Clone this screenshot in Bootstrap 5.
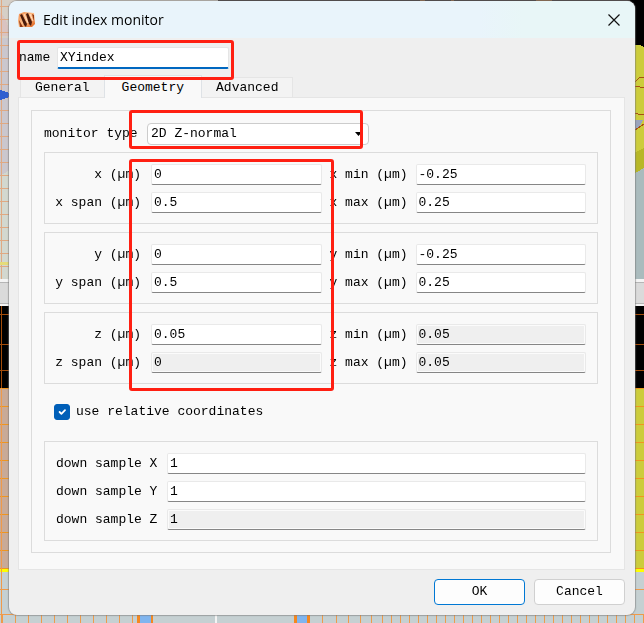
<!DOCTYPE html>
<html lang="en">
<head>
<meta charset="utf-8">
<meta name="viewport" content="width=device-width, initial-scale=1">
<title>Edit index monitor</title>
<link href="https://cdn.jsdelivr.net/npm/bootstrap@5.3.0/dist/css/bootstrap.min.css" rel="stylesheet">
<style>
body { font: 13px/20px "Liberation Mono", monospace; color: #000; background: #c5d0d2; min-height: 100vh; padding: 1px 9px 9px; }
.backdrop { position: fixed; inset: 0; width: 100%; height: 100%; z-index: -1; }
.dialog-window { background: #efefef; border-radius: 8px; box-shadow: 0 0 1px 1px #77777788; }
.title-bar { height: 37px; padding: 0 13px 0 9px; border-radius: 8px 8px 0 0; background: linear-gradient(90deg, #e9f4fb 75%, #e8f6f7 82%); font: 14px/20px "Open Sans", sans-serif; }
.title-bar button { width: 16px; height: 16px; line-height: 0; }
.name-row { padding: 9px 0 0 10px; height: 37px; }
.name-row label { width: 38px; line-height: 22px; }
.name-row .form-control { width: 172px; border-color: #e5e5e5; border-bottom: 2px solid #0067c0; }
.form-control, .form-select { font: inherit; color: #000; height: 22px; min-height: 0; padding: 0 2px; border: 1px solid #e9e9e9; border-bottom-color: #868686; border-radius: 2px; background-color: #fff; }
.form-control:disabled { background: #efefef; box-shadow: inset 0 0 0 1px #fbfbfb; opacity: 1; color: #000; }
.param-grid .form-control, .sample-grid .form-control { height: 21px; }
.nav-tabs { border: 0; padding-left: 11px; }
.nav-tabs .nav-link { font: inherit; line-height: 18px; color: #000; background: #f3f3f3; border: 1px solid #e5e5e5; border-radius: 0; padding: 1px 14px 0; height: 21px; margin: 0 -1px 0 0; }
.nav-tabs .nav-link.active { background: #f9f9f9; border-bottom: 0; height: 23px; padding: 1px 17px 0; position: relative; z-index: 1; color: #000; }
.tab-pane-box { background: #f9f9f9; border: 1px solid #e5e5e5; margin: -1px 10px 0 9px; padding: 12px 13px 16px 12px; }
.frame-box { border: 1px solid #dcdcdc; }
.main-frame { padding: 12px 12px 11px 12px; }
.type-row { height: 21px; margin-bottom: 8px; }
.type-row label { width: 103px; white-space: nowrap; }
.type-row .form-select { width: 222px; padding: 0 3px; border-color: #ccc; border-radius: 4px; background-size: 7px 4px; background-position: right 6px center; background-image: url("data:image/svg+xml,%3csvg xmlns='http://www.w3.org/2000/svg' viewBox='0 0 7 4'%3e%3cpath d='M0 0h7L3.500 4z'/%3e%3c/svg%3e"); }
.param-grid { display: grid; grid-template-columns: 98px 1fr 78px 1fr; gap: 7px 8px; padding: 11px 11px 10px 0; }
.param-grid label { text-align: right; white-space: nowrap; line-height: 21px; }
.param-grid label:nth-of-type(odd) { padding-right: 2px; }
.check-row { margin: 17px 0 18px 10px; line-height: 22px; }
.check-row label { padding-left: 6px; }
.check-row .form-check-input { width: 16px; height: 16px; margin: 0; border-radius: 3px; }
.check-row .form-check-input:checked { background-color: #005fb8; border-color: #005fb8; background-size: 12px; }
.sample-grid { display: grid; grid-template-columns: 111px 1fr; row-gap: 7px; padding: 11px 11px 10px; }
.sample-grid label { white-space: nowrap; line-height: 21px; }
.dialog-actions { padding: 9px 10px 10px; gap: 9px; }
.dialog-actions .btn { font: inherit; color: #000; background: #fdfdfd; border: 1px solid #d0d0d0; border-radius: 4px; width: 91px; height: 26px; padding: 0; }
.dialog-actions .btn.ok-btn { border-color: #0078d4; }
.callout-box { position: absolute; border: 3px solid #ff1f12; border-radius: 3px; pointer-events: none; z-index: 3; }
.name-callout { left: 8px; top: 2px; width: 217px; height: 40px; }
.type-callout { left: 85px; top: -13px; width: 234px; height: 39px; }
.params-callout { left: 85px; top: 7px; width: 205px; height: 232px; }
</style>
<script src="https://cdn.jsdelivr.net/npm/bootstrap@5.3.0/dist/js/bootstrap.bundle.min.js"></script>
</head>
<body>
<svg class="backdrop" viewBox="0 0 644 623" preserveAspectRatio="none" aria-hidden="true" shape-rendering="crispEdges">
  <defs>
    <pattern id="meshA" width="20" height="13" patternUnits="userSpaceOnUse"><path d="M0 6.500H20" stroke="#e0a982"/></pattern>
    <pattern id="meshB" width="20" height="18" patternUnits="userSpaceOnUse" y="10"><path d="M0 .5H20" stroke="#f0961e"/></pattern>
    <pattern id="meshC" width="9" height="10" patternUnits="userSpaceOnUse"><path d="M4.500 0V10" stroke="#ef9a4a"/></pattern>
    <pattern id="meshD" width="13" height="10" patternUnits="userSpaceOnUse"><path d="M2.500 0V10" stroke="#ef9a4a"/></pattern>
  </defs>
  <path fill="#d6cfc6" d="M0 0H218V280H0z"/>
  <path fill="#d9c3c0" d="M0 12Q9 20 9 36H0z"/>
  <path fill="#cbc7cd" d="M0 38H10V170L0 176z"/>
  <path fill="#d3d8cf" d="M0 176L10 170V280H0z"/>
  <path fill="url(#meshA)" d="M0 0H10V280H0z"/>
  <path d="M1.500 0V280" stroke="#e0a982"/>
  <path fill="#2f5fd0" d="M0 90l9 3v4l-9 3z"/>
  <path fill="#e5dc79" d="M0 262H10V265H0z"/>
  <path fill="#302828" d="M218 0H644V2H218z"/>
  <path fill="#8c5a32" d="M420 0h5v1h-5zM451 0h3v1h-3zM536 0h16v1h-16z"/>
  <path fill="#000" d="M630 0H644V60H630z"/>
  <path fill="#cccc3c" d="M630 45H640L644 47V173H630z"/>
  <path fill="#b7b727" d="M630 155L644 148V173H630z"/>
  <path fill="#aabbbd" d="M630 176L644 168V280H630z"/>
  <path fill="#9aa3bd" d="M634 120H643L640 126L634 130z"/>
  <path fill="none" stroke="#a84e14" d="M635 82L639 78L644 77M635 86.500L644 87.500M635 113.500L644 115M635 130L644 124"/>
  <path fill="#f4f4f4" d="M0 279H644V306H0z"/>
  <path fill="#dadada" stroke="#b5b5b5" d="M-1 282.500H645V303.500H-1z"/>
  <path fill="#000" d="M0 306H644V388H0z"/>
  <path stroke="#a34c0a" d="M0 314.500H644M0 344.500H644M0 370.500H644M1.500 306V388"/>
  <path fill="#c9aa97" d="M0 388H320V569H0z"/>
  <path fill="#cccc3c" d="M320 388H644V569H320z"/>
  <path fill="url(#meshB)" d="M0 388H644V569H0z"/>
  <path fill="#ffff00" d="M0 569H644V572H0z"/>
  <path fill="#c5d0d2" d="M0 572H644V623H0z"/>
  <path stroke="#ef9a4a" d="M0 589.500H644M0 614.500H155M310 614.500H644M1.500 388V623"/>
  <path fill="url(#meshD)" d="M0 614H137V623H0z"/>
  <path fill="url(#meshC)" d="M376 614H644V623H376z"/>
  <path fill="#80b5ef" d="M140 614h12v9h-12zM297 614h10v9h-10z"/>
  <path fill="#f5871f" d="M137 614h3v9h-3zM151 614h2v9h-2zM294 614h3v9h-3zM307 614h3v9h-3z"/>
  <path fill="#ef9a4a" d="M322 614h1v9h-1zM336 614h1v9h-1zM348 614h1v9h-1zM360 614h1v9h-1zM371 614h1v9h-1z"/>
  <path fill="#f4f4f4" d="M215 614h2v9h-2z"/>
</svg>

<main class="dialog-window">
  <header class="title-bar d-flex align-items-center">
    <svg class="me-2" width="17" height="16" viewBox="0 0 17 16" aria-hidden="true">
      <defs><linearGradient id="logoFill" x2="1" y2="1"><stop stop-color="#f08a4a"/><stop offset=".5" stop-color="#ffbd87"/><stop offset="1" stop-color="#df5d15"/></linearGradient></defs>
      <path fill="url(#logoFill)" d="M1 2L6 0L16 1L17 12L14 15L1 15L0 9z"/>
      <path fill="#4a1a0a" d="M2 3L4 2L9 12L8 15L6 13zM8 2L10 1L14 10L13 14L11 12z"/>
      <path fill="#8f3610" d="M1 8L5 15H2zM14 2L16 3V9z"/>
      <path fill="none" stroke="#ffe0c4" d="M6 2L10 11M12 2L15 9"/>
    </svg>
    <span>Edit index monitor</span>
    <button type="button" class="btn p-0 border-0 ms-auto" aria-label="Close">
      <svg width="14" height="14" viewBox="0 0 14 14" aria-hidden="true"><path d="M1.500 1.500L12.500 12.500M12.500 1.500L1.500 12.500" stroke="#111" stroke-width="1.200"/></svg>
    </button>
  </header>

  <form>
    <div class="name-row d-flex position-relative">
      <label for="monitorName">name</label>
      <input id="monitorName" class="form-control" type="text" value="XYindex">
      <div class="callout-box name-callout"></div>
    </div>

    <div class="nav nav-tabs align-items-end" role="tablist">
      <button class="nav-link" type="button" role="tab">General</button>
      <button class="nav-link active" type="button" role="tab" aria-selected="true">Geometry</button>
      <button class="nav-link" type="button" role="tab">Advanced</button>
    </div>

    <div class="tab-pane-box">
      <div class="frame-box main-frame">
        <div class="type-row d-flex align-items-center position-relative">
          <label for="monitorType">monitor type</label>
          <select id="monitorType" class="form-select"><option>2D Z-normal</option></select>
          <div class="callout-box type-callout"></div>
        </div>

        <div class="d-flex flex-column gap-2 position-relative">
          <div class="frame-box param-grid">
            <label for="x">x (µm)</label><input id="x" class="form-control" value="0">
            <label for="xMin">x min (µm)</label><input id="xMin" class="form-control" value="-0.25">
            <label for="xSpan">x span (µm)</label><input id="xSpan" class="form-control" value="0.5">
            <label for="xMax">x max (µm)</label><input id="xMax" class="form-control" value="0.25">
          </div>
          <div class="frame-box param-grid">
            <label for="y">y (µm)</label><input id="y" class="form-control" value="0">
            <label for="yMin">y min (µm)</label><input id="yMin" class="form-control" value="-0.25">
            <label for="ySpan">y span (µm)</label><input id="ySpan" class="form-control" value="0.5">
            <label for="yMax">y max (µm)</label><input id="yMax" class="form-control" value="0.25">
          </div>
          <div class="frame-box param-grid">
            <label for="z">z (µm)</label><input id="z" class="form-control" value="0.05">
            <label for="zMin">z min (µm)</label><input id="zMin" class="form-control" value="0.05" disabled>
            <label for="zSpan">z span (µm)</label><input id="zSpan" class="form-control" value="0" disabled>
            <label for="zMax">z max (µm)</label><input id="zMax" class="form-control" value="0.05" disabled>
          </div>
          <div class="callout-box params-callout"></div>
        </div>

        <div class="check-row d-flex align-items-center">
          <input id="relative" class="form-check-input" type="checkbox" checked>
          <label for="relative">use relative coordinates</label>
        </div>

        <div class="frame-box sample-grid">
          <label for="sampleX">down sample X</label><input id="sampleX" class="form-control" value="1">
          <label for="sampleY">down sample Y</label><input id="sampleY" class="form-control" value="1">
          <label for="sampleZ">down sample Z</label><input id="sampleZ" class="form-control" value="1" disabled>
        </div>
      </div>
    </div>

    <div class="dialog-actions d-flex justify-content-end">
      <button type="button" class="btn ok-btn">OK</button>
      <button type="button" class="btn">Cancel</button>
    </div>
  </form>
</main>
</body>
</html>
